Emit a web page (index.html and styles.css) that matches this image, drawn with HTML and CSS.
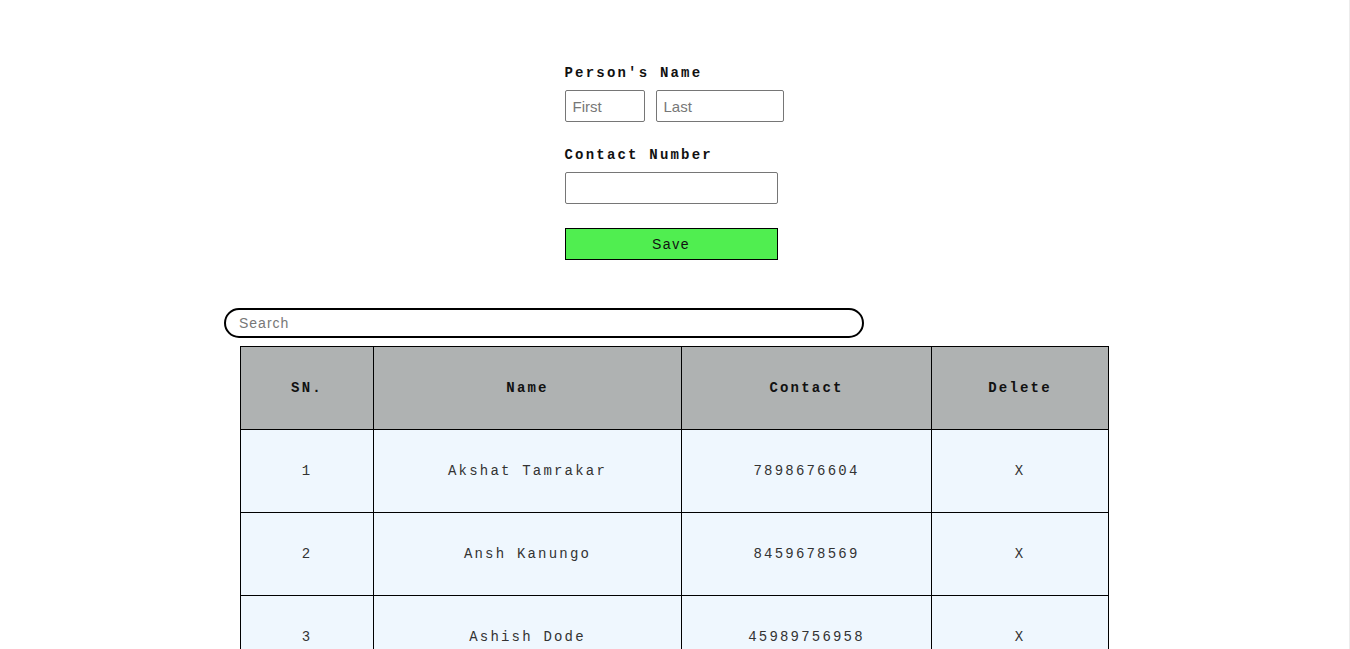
FILE: index.html
```html
<!DOCTYPE html>
<html>
<head>
<meta charset="utf-8">
<link rel="stylesheet" href="styles.css">
</head>
<body>
<div class="form">
  <div class="label">Person's Name</div>
  <div class="name-row">
    <input class="in first" type="text" placeholder="First">
    <input class="in last" type="text" placeholder="Last">
  </div>
  <div class="label label-contact">Contact Number</div>
  <input class="in contact" type="text">
  <button class="save">Save</button>
</div>
<div class="search-wrap">
  <input class="search" type="text" placeholder="Search">
</div>
<table class="list">
  <colgroup>
    <col class="c1"><col class="c2"><col class="c3"><col class="c4">
  </colgroup>
  <thead>
    <tr><th>SN.</th><th>Name</th><th>Contact</th><th>Delete</th></tr>
  </thead>
  <tbody>
    <tr><td>1</td><td>Akshat Tamrakar</td><td>7898676604</td><td>X</td></tr>
    <tr><td>2</td><td>Ansh Kanungo</td><td>8459678569</td><td>X</td></tr>
    <tr><td>3</td><td>Ashish Dode</td><td>45989756958</td><td>X</td></tr>
  </tbody>
</table>
</body>
</html>
```
FILE: styles.css
```css
html, body {
  margin: 0;
  padding: 0;
  background: #fff;
}
body {
  font-family: "Liberation Mono", "Courier New", monospace;
  border-right: 1px solid #ececec;
  box-sizing: border-box;
  width: 1350px;
  height: 649px;
  overflow: hidden;
}
.form {
  width: 220px;
  margin: 0 auto;
  padding-top: 64px;
  display: flex;
  flex-direction: column;
  align-items: flex-start;
}
.label {
  font-size: 14px;
  font-weight: bold;
  letter-spacing: 2.2px;
  line-height: 18px;
  color: #111;
}
.label-contact {
  margin-top: 24px;
}
.name-row {
  display: flex;
  gap: 11px;
  margin-top: 8px;
}
.in {
  box-sizing: border-box;
  height: 32px;
  border: 1px solid #767676;
  border-radius: 2px;
  padding: 0 7px;
  font-family: "Liberation Sans", Arial, sans-serif;
  font-size: 15px;
  color: #222;
  background: #fff;
  outline: none;
}
.in::placeholder {
  color: #777;
}
.first { width: 80px; }
.last { width: 128px; }
.contact {
  width: 213px;
  margin-top: 8px;
}
.save {
  box-sizing: border-box;
  width: 213px;
  height: 32px;
  margin-top: 24px;
  background: #50ee50;
  border: 1px solid #000;
  font-family: "Liberation Sans", Arial, sans-serif;
  font-size: 14px;
  letter-spacing: 1.5px;
  color: #111;
  padding: 0;
}
.search-wrap {
  margin-top: 48px;
  padding-left: 224px;
}
.search {
  box-sizing: border-box;
  width: 640px;
  height: 30px;
  border: 2px solid #000;
  border-radius: 15px;
  padding: 0 13px;
  font-family: "Liberation Sans", Arial, sans-serif;
  font-size: 14px;
  letter-spacing: 1px;
  outline: none;
}
.search::placeholder {
  color: #777;
}
.list {
  margin: 8px 0 0 240px;
  width: 868px;
  border-collapse: collapse;
  table-layout: fixed;
}
.c1 { width: 133px; }
.c2 { width: 308px; }
.c3 { width: 250px; }
.c4 { width: 177px; }
.list th, .list td {
  border: 1px solid #000;
  text-align: center;
  font-size: 14px;
  letter-spacing: 2.2px;
  padding: 0;
}
.list th {
  background: #afb2b2;
  font-weight: bold;
  color: #111;
  height: 82px;
}
.list td {
  background: #eff7fe;
  color: #333;
  height: 82px;
}
```
